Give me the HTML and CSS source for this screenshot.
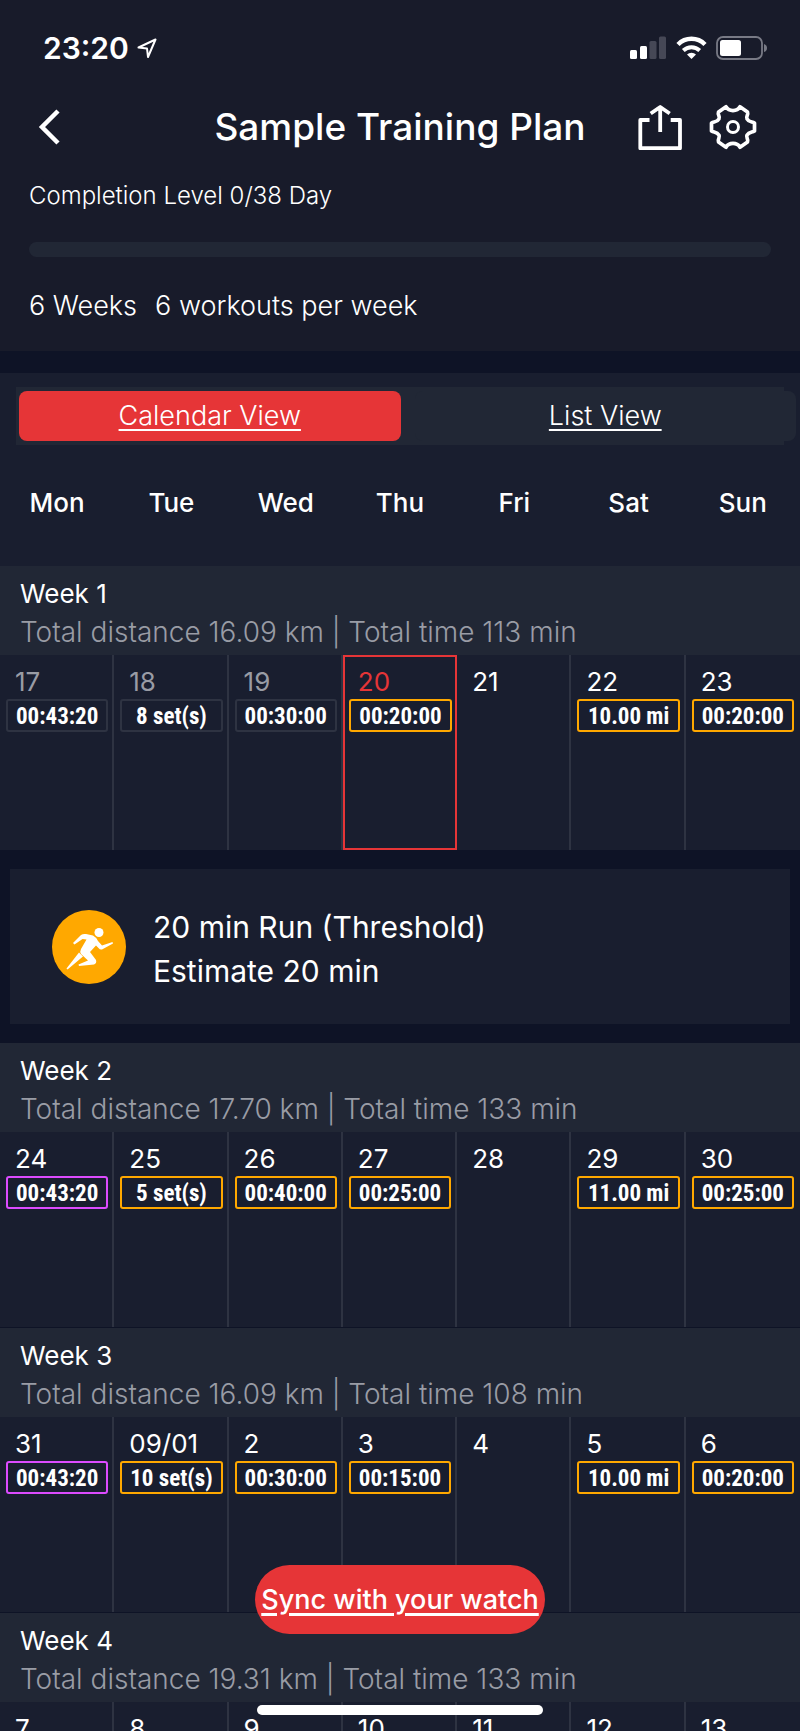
FILE: index.html
```html
<!DOCTYPE html>
<html lang="en">
<head>
    <meta charset="UTF-8">
    <meta name="viewport" content="width=device-width, initial-scale=1.0">
    <title>Sample Training Plan</title>
    <link rel="stylesheet" href="styles.css">
</head>
<body>
    <div class="screen">
        <header class="header">
            <div class="status-bar">
                <div class="clock">
                    <span>23:20</span>
                    <svg width="20" height="21" viewBox="0 0 20 21"><path d="M1.5 9.5 L18.5 1.5 L11 19 L10 10.5 Z" fill="none" stroke="#fff" stroke-width="2" stroke-linejoin="round"/></svg>
                </div>
                <div class="status-icons">
                    <svg width="37" height="24" viewBox="0 0 37 24">
                        <rect x="0" y="14" width="7" height="9" rx="1.5" fill="#fff"/>
                        <rect x="10" y="10" width="7" height="13" rx="1.5" fill="#fff"/>
                        <rect x="19.5" y="5" width="7" height="18" rx="1.5" fill="#464856"/>
                        <rect x="29" y="0.5" width="7" height="22.5" rx="1.5" fill="#464856"/>
                    </svg>
                    <svg width="31" height="24" viewBox="0 0 31 24">
                        <path d="M2 8.5 A19 19 0 0 1 29 8.5" fill="none" stroke="#fff" stroke-width="4.5"/>
                        <path d="M7.3 14.5 A12 12 0 0 1 23.7 14.5" fill="none" stroke="#fff" stroke-width="4"/>
                        <path d="M15.5 23 L11 18.5 A6.5 6.5 0 0 1 20 18.5 Z" fill="#fff"/>
                    </svg>
                    <svg width="52" height="24" viewBox="0 0 52 24">
                        <rect x="1" y="1" width="45" height="22" rx="6" fill="none" stroke="#787a85" stroke-width="1.8"/>
                        <rect x="4" y="4" width="21" height="16" rx="2.5" fill="#fff"/>
                        <path d="M48 8 Q51 9 51 12 T48 16 Z" fill="#787a85"/>
                    </svg>
                </div>
            </div>
            <div class="title-bar">
                <button class="icon-btn back" aria-label="Back">
                    <svg width="22" height="36" viewBox="0 0 22 36"><path d="M20 2 L4 18 L20 34" fill="none" stroke="#fff" stroke-width="4.5"/></svg>
                </button>
                <h1>Sample Training Plan</h1>
                <div class="actions">
                    <button class="icon-btn" aria-label="Share">
                        <svg width="44" height="46" viewBox="0 0 44 46"><path d="M11.5 16 H2.3 V44.2 H42 V16 H32.7 M22.2 28 V3 M12.7 9.5 L22.2 3 L31.7 9.5" fill="none" stroke="#fff" stroke-width="3.8" stroke-linejoin="round"/></svg>
                    </button>
                    <button class="icon-btn" aria-label="Settings">
                        <svg width="48" height="48" viewBox="0 0 48 48"><path d="M2.5 20 C5 18.5 8 19.5 10 15.8 C11.4 13.2 8.3 12.5 9.5 9 L17 3.8 C20 8.8 28 8.8 31 3.8 L38.5 9 C39.7 12.5 36.6 13.2 38 15.8 C40 19.5 43 18.5 45.5 20 V28 C43 29.5 40 28.5 38 32.2 C36.6 34.8 39.7 35.5 38.5 39 L31 44.2 C28 39.2 20 39.2 17 44.2 L9.5 39 C8.3 35.5 11.4 34.8 10 32.2 C8 28.5 5 29.5 2.5 28 Z" fill="none" stroke="#fff" stroke-width="3.7" stroke-linejoin="round"/><circle cx="24" cy="24" r="5.5" fill="none" stroke="#fff" stroke-width="3"/></svg>
                    </button>
                </div>
            </div>
            <p class="completion">Completion Level 0/38 Day</p>
            <div class="progress"></div>
            <p class="summary"><span>6 Weeks</span><span>6 workouts per week</span></p>
        </header>

        <main>
            <section class="calendar-top">
                <nav class="tabs">
                    <a href="#calendar" class="tab active">Calendar View</a>
                    <a href="#list" class="tab">List View</a>
                </nav>
                <div class="weekdays">
                    <span>Mon</span><span>Tue</span><span>Wed</span><span>Thu</span><span>Fri</span><span>Sat</span><span>Sun</span>
                </div>
            </section>

            <section class="week">
                <div class="week-header">
                    <h2>Week 1</h2>
                    <p>Total distance 16.09 km | Total time 113 min</p>
                </div>
                <div class="days">
                    <div class="day past"><span>17</span><span class="badge">00:43:20</span></div>
                    <div class="day past"><span>18</span><span class="badge">8 set(s)</span></div>
                    <div class="day past"><span>19</span><span class="badge">00:30:00</span></div>
                    <div class="day today"><span>20</span><span class="badge run">00:20:00</span></div>
                    <div class="day"><span>21</span></div>
                    <div class="day"><span>22</span><span class="badge run">10.00 mi</span></div>
                    <div class="day"><span>23</span><span class="badge run">00:20:00</span></div>
                </div>
            </section>

            <section class="workout">
                <svg width="74" height="74" viewBox="0 0 74 74">
                    <circle cx="37" cy="37" r="37" fill="#ffa800"/>
                    <circle cx="47" cy="22.5" r="4.5" fill="#fff"/>
                    <path d="M21 33 L29 25 Q31 23.5 34 24 L41 25.5 Q44 27 46 31 L50 35.5 L60.5 32 L61 33.5 L50 39.5 Q48 40 46.5 38 L44 35.5 L38 42 L44 50 Q45 53 42 54.5 L27 56 L26.5 54.5 L36 50.5 L29 44 Q27.5 42 29 39 L34.5 29.5 L30.5 29 L22.5 34.5 Z" fill="#fff"/>
                    <path d="M27 42.5 L31 46.5 L15.5 59.5 L14.5 58.5 Z" fill="#fff"/>
                </svg>
                <div class="workout-text">
                    <p>20 min Run (Threshold)</p>
                    <p>Estimate 20 min</p>
                </div>
            </section>

            <section class="week">
                <div class="week-header">
                    <h2>Week 2</h2>
                    <p>Total distance 17.70 km | Total time 133 min</p>
                </div>
                <div class="days">
                    <div class="day"><span>24</span><span class="badge strength">00:43:20</span></div>
                    <div class="day"><span>25</span><span class="badge run">5 set(s)</span></div>
                    <div class="day"><span>26</span><span class="badge run">00:40:00</span></div>
                    <div class="day"><span>27</span><span class="badge run">00:25:00</span></div>
                    <div class="day"><span>28</span></div>
                    <div class="day"><span>29</span><span class="badge run">11.00 mi</span></div>
                    <div class="day"><span>30</span><span class="badge run">00:25:00</span></div>
                </div>
            </section>

            <section class="week">
                <div class="week-header">
                    <h2>Week 3</h2>
                    <p>Total distance 16.09 km | Total time 108 min</p>
                </div>
                <div class="days">
                    <div class="day"><span>31</span><span class="badge strength">00:43:20</span></div>
                    <div class="day"><span>09/01</span><span class="badge run">10 set(s)</span></div>
                    <div class="day"><span>2</span><span class="badge run">00:30:00</span></div>
                    <div class="day"><span>3</span><span class="badge run">00:15:00</span></div>
                    <div class="day"><span>4</span></div>
                    <div class="day"><span>5</span><span class="badge run">10.00 mi</span></div>
                    <div class="day"><span>6</span><span class="badge run">00:20:00</span></div>
                </div>
            </section>

            <section class="week">
                <div class="week-header">
                    <h2>Week 4</h2>
                    <p>Total distance 19.31 km | Total time 133 min</p>
                </div>
                <div class="days">
                    <div class="day"><span>7</span></div>
                    <div class="day"><span>8</span></div>
                    <div class="day"><span>9</span></div>
                    <div class="day"><span>10</span></div>
                    <div class="day"><span>11</span></div>
                    <div class="day"><span>12</span></div>
                    <div class="day"><span>13</span></div>
                </div>
            </section>
        </main>

        <div class="bottom">
            <a href="#sync" class="sync-btn">Sync with your watch</a>
            <div class="home-bar"></div>
        </div>
    </div>
</body>
</html>
```
FILE: styles.css
```css
* {
    margin: 0;
    padding: 0;
    box-sizing: border-box;
}

body {
    font-family: Inter, "Liberation Sans", sans-serif;
    font-size: 26px;
    background-color: #0e1326;
    color: #fff;
}

svg {
    display: block;
    flex: none;
}

.screen {
    position: relative;
    height: 100vh;
    overflow: hidden;
}

/* Header */
.header {
    background-color: #181b2a;
    padding: 28px 29px 27px;
}

.status-bar {
    display: flex;
    justify-content: space-between;
    align-items: center;
    height: 40px;
    padding: 0 3px 0 14px;
}

.clock {
    display: flex;
    align-items: center;
    gap: 8px;
    font-size: 30px;
    font-weight: 600;
}

.status-icons {
    display: flex;
    gap: 9px;
}

.title-bar {
    display: grid;
    grid-template-columns: 1fr auto 1fr;
    align-items: center;
    height: 64px;
    margin-top: 27px;
    padding: 0 14px;
}

.title-bar h1 {
    font-size: 37px;
    line-height: 44px;
    font-weight: 500;
}

.icon-btn {
    background: none;
    border: none;
    cursor: pointer;
}

.back {
    margin-left: -5px;
}

.actions {
    display: flex;
    align-items: center;
    justify-content: flex-end;
    gap: 27px;
}

.completion {
    margin-top: 20px;
    font-size: 24px;
    line-height: 34px;
    font-weight: 300;
}

.progress {
    height: 15px;
    margin-top: 29px;
    border-radius: 8px;
    background-color: #212735;
}

.summary {
    display: flex;
    gap: 18px;
    margin-top: 31px;
    font-size: 27px;
    line-height: 36px;
    font-weight: 300;
}

/* View switch and weekday names */
.calendar-top {
    margin-top: 22px;
    padding-top: 14px;
    background-color: #191e2f;
}

.tabs {
    display: flex;
    gap: 14px;
    margin: 0 16px;
    padding: 4px 0 4px 3px;
    background-color: #212735;
}

.tab {
    flex: 1;
    height: 50px;
    line-height: 50px;
    border-radius: 8px;
    background-color: #212735;
    color: #fff;
    font-size: 27px;
    font-weight: 300;
    text-align: center;
    text-underline-offset: 4px;
    text-decoration-thickness: 2px;
}

.tab:last-child {
    margin-right: -12px;
}

.tab.active {
    background-color: #e63537;
}

.weekdays {
    display: grid;
    grid-template-columns: repeat(7, 1fr);
    height: 121px;
    padding-top: 40px;
    line-height: 36px;
    font-weight: 500;
    text-align: center;
}

/* Weeks */
.week + .week {
    margin-top: 1px;
}

.week-header {
    height: 89px;
    padding: 9px 20px 0;
    background-color: #212735;
}

.week-header h2 {
    font-size: 26px;
    line-height: 38px;
    font-weight: 400;
}

.week-header p {
    font-size: 28px;
    line-height: 38px;
    font-weight: 300;
    color: #999ca5;
}

.days {
    display: grid;
    grid-template-columns: repeat(7, 1fr);
    background-color: #191e2f;
}

.day {
    display: flex;
    flex-direction: column;
    height: 195px;
    padding: 9px 4px 0 6px;
    border-right: 2px solid #2e3342;
    line-height: 35px;
}

.day > span:first-child {
    padding-left: 9px;
}

.day:last-child {
    border-right-color: transparent;
}

.day.past {
    color: #999ca5;
}

.day.today {
    padding: 7px 3px 0 4px;
    border: 2px solid #e63537;
    color: #e63537;
}

.badge {
    height: 33px;
    border: 2px solid #2e3342;
    border-radius: 3px;
    font-family: "Roboto Condensed", Roboto, sans-serif;
    font-size: 23px;
    font-weight: 700;
    line-height: 31px;
    text-align: center;
    color: #fff;
}

.badge.run {
    border-color: #ffa800;
}

.badge.strength {
    border-color: #dc4bff;
}

/* Selected workout */
.workout {
    display: flex;
    align-items: center;
    gap: 27px;
    height: 155px;
    margin: 19px 10px;
    padding: 0 42px;
    background-color: #191e2f;
}

.workout-text {
    padding-top: 5px;
    font-size: 30px;
    line-height: 44px;
}

/* Floating button */
.bottom {
    position: absolute;
    left: 0;
    right: 0;
    bottom: 16px;
    display: flex;
    flex-direction: column;
    align-items: center;
    gap: 71px;
}

.sync-btn {
    padding: 0 6px;
    border-radius: 35px;
    background-color: #e63537;
    color: #fff;
    font-size: 27px;
    font-weight: 500;
    line-height: 69px;
    text-underline-offset: 4px;
    text-decoration-thickness: 3px;
}

.home-bar {
    width: 286px;
    height: 10px;
    border-radius: 5px;
    background-color: #fff;
}
```
